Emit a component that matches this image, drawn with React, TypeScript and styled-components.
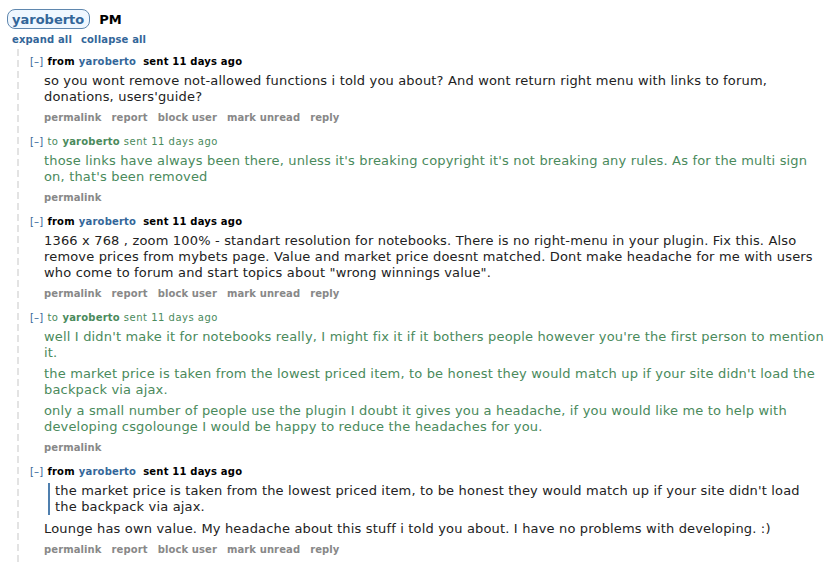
import React from "react";
import styled, { createGlobalStyle } from "styled-components";

const GlobalStyle = createGlobalStyle`
  html, body { margin: 0; padding: 0; background: #fff; }
  body { font-family: Verdana, "DejaVu Sans", sans-serif; color: #222; }
`;

const Page = styled.div`
  padding: 9px 0 0 7px;
  width: 830px;
  box-sizing: border-box;
`;

const Header = styled.div`
  display: flex;
  align-items: center;
  gap: 9px;
`;

const Pill = styled.span`
  display: inline-flex;
  align-items: center;
  height: 18px;
  padding: 0 5px 0 4px;
  border: 1px solid #5f87ae;
  border-radius: 8px;
  background: #eff7ff;
  color: #336699;
  font-size: 13px;
  font-weight: bold;
`;

const Title = styled.span`
  font-size: 13px;
  font-weight: bold;
  color: #000;
`;

const Links = styled.div`
  display: flex;
  gap: 9px;
  margin: 5px 0 0 5px;
  font-size: 10px;
  font-weight: bold;
  color: #336699;
  line-height: 12px;
  letter-spacing: 0.15px;
`;

const Thread = styled.div`
  margin: 3px 0 0 9px;
  padding: 7px 0 8px 14px;
  background-image: repeating-linear-gradient(to bottom, #e3e3e3 0 7px, transparent 7px 11px);
  background-size: 2px 100%;
  background-repeat: no-repeat;
  background-position: 1px 0;
`;

const Message = styled.div`
  & + & { margin-top: 12px; }
`;

const Tagline = styled.div<{ $sent?: boolean }>`
  font-size: 10px;
  line-height: 12px;
  letter-spacing: ${(p) => (p.$sent ? "0.5px" : "0.2px")};
  color: ${(p) => (p.$sent ? "#4a8a5c" : "#000")};
  font-weight: ${(p) => (p.$sent ? "normal" : "bold")};
  white-space: nowrap;
`;

const Toggle = styled.span`
  color: #369;
  font-weight: normal;
  letter-spacing: 0.2px;
  margin-right: 4px;
`;

const User = styled.span<{ $sent?: boolean }>`
  font-weight: bold;
  color: ${(p) => (p.$sent ? "#4a8a5c" : "#336699")};
  letter-spacing: 0.2px;
  margin: 0 ${(p) => (p.$sent ? "4px" : "7px")} 0 4px;
`;

const Body = styled.div<{ $sent?: boolean }>`
  margin: 5px 0 0 14px;
  font-size: 13px;
  line-height: 16px;
  letter-spacing: 0.17px;
  color: ${(p) => (p.$sent ? "#4a8a5c" : "#222")};
  max-width: 780px;
`;

const Para = styled.p`
  margin: 0;
  & + & { margin-top: 5px; }
`;

const Quote = styled.blockquote`
  margin: 0 0 6px 4px;
  padding-left: 5px;
  border-left: 2px solid #4f7fae;
`;

const Buttons = styled.ul`
  display: flex;
  gap: 10px;
  list-style: none;
  margin: 7px 0 0 14px;
  padding: 0;
  font-size: 10px;
  font-weight: bold;
  line-height: 12px;
  letter-spacing: 0.1px;
  color: #888;
`;

type Msg = {
  sent: boolean;
  paras: string[];
  quote?: string;
};

const messages: Msg[] = [
  {
    sent: false,
    paras: [
      "so you wont remove not-allowed functions i told you about? And wont return right menu with links to forum, donations, users'guide?",
    ],
  },
  {
    sent: true,
    paras: [
      "those links have always been there, unless it's breaking copyright it's not breaking any rules. As for the multi sign on, that's been removed",
    ],
  },
  {
    sent: false,
    paras: [
      "1366 x 768 , zoom 100% - standart resolution for notebooks. There is no right-menu in your plugin. Fix this. Also remove prices from mybets page. Value and market price doesnt matched. Dont make headache for me with users who come to forum and start topics about \"wrong winnings value\".",
    ],
  },
  {
    sent: true,
    paras: [
      "well I didn't make it for notebooks really, I might fix it if it bothers people however you're the first person to mention it.",
      "the market price is taken from the lowest priced item, to be honest they would match up if your site didn't load the backpack via ajax.",
      "only a small number of people use the plugin I doubt it gives you a headache, if you would like me to help with developing csgolounge I would be happy to reduce the headaches for you.",
    ],
  },
  {
    sent: false,
    quote:
      "the market price is taken from the lowest priced item, to be honest they would match up if your site didn't load the backpack via ajax.",
    paras: [
      "Lounge has own value. My headache about this stuff i told you about. I have no problems with developing. :)",
    ],
  },
];

export default function App() {
  return (
    <>
      <GlobalStyle />
      <Page>
        <Header>
          <Pill>yaroberto</Pill>
          <Title>PM</Title>
        </Header>
        <Links>
          <span>expand all</span>
          <span>collapse all</span>
        </Links>
        <Thread>
          {messages.map((m, i) => (
            <Message key={i}>
              <Tagline $sent={m.sent}>
                <Toggle>[–]</Toggle>
                {m.sent ? "to" : "from"}
                <User $sent={m.sent}>yaroberto</User>
                sent 11 days ago
              </Tagline>
              <Body $sent={m.sent}>
                {m.quote && <Quote>{m.quote}</Quote>}
                {m.paras.map((p, j) => (
                  <Para key={j}>{p}</Para>
                ))}
              </Body>
              <Buttons>
                <li>permalink</li>
                {!m.sent && (
                  <>
                    <li>report</li>
                    <li>block user</li>
                    <li>mark unread</li>
                    <li>reply</li>
                  </>
                )}
              </Buttons>
            </Message>
          ))}
        </Thread>
      </Page>
    </>
  );
}
